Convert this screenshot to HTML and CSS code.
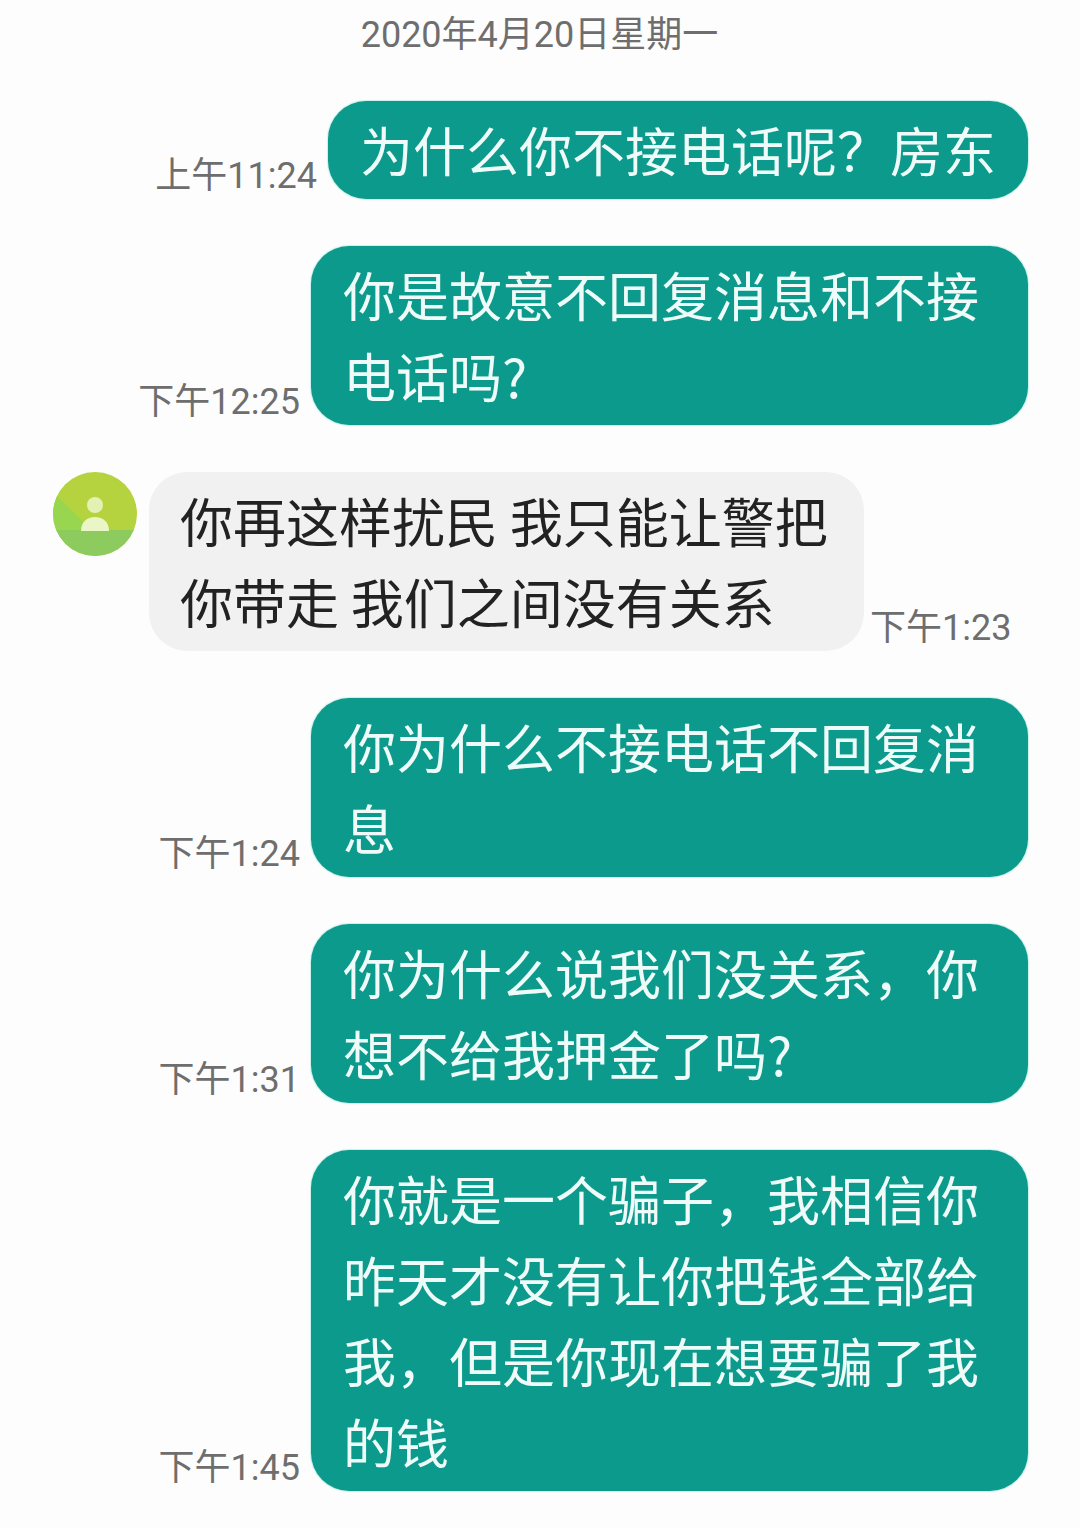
FILE: index.html
```html
<!DOCTYPE html>
<html lang="zh-CN">
  <head>
    <meta charset="utf-8">
    <title>聊天记录</title>
    <link rel="stylesheet" href="styles.css">
  </head>
  <body>
  <div class="chat">
    <div class="date">2020年4月20日星期一</div>

    <div class="row sent">
      <span class="time">上午11:24</span>
      <div class="bubble">为什么你不接电话呢？房东</div>
    </div>

    <div class="row sent">
      <span class="time">下午12:25</span>
      <div class="bubble">你是故意不回复消息和不接电话吗?</div>
    </div>

    <div class="row received">
      <svg class="avatar" viewBox="0 0 84 84" aria-hidden="true">
        <defs>
          <clipPath id="avatar-clip"><circle cx="42" cy="42" r="42"/></clipPath>
        </defs>
        <g clip-path="url(#avatar-clip)">
          <rect width="84" height="84" fill="#b4d33f"/>
          <polygon points="0,20 40,59 0,59" fill="#98d650"/>
          <rect y="58" width="84" height="26" fill="#8dcb5e"/>
        </g>
        <circle cx="42" cy="33" r="8" fill="#e3f1b4"/>
        <path d="M28 59c0-9 6-14 14-14s14 5 14 14z" fill="#eaf6c6"/>
      </svg>
      <div class="bubble">你再这样扰民 我只能让警把你带走 我们之间没有关系</div>
      <span class="time">下午1:23</span>
    </div>

    <div class="row sent">
      <span class="time">下午1:24</span>
      <div class="bubble">你为什么不接电话不回复消息</div>
    </div>

    <div class="row sent">
      <span class="time">下午1:31</span>
      <div class="bubble">你为什么说我们没关系，你想不给我押金了吗?</div>
    </div>

    <div class="row sent">
      <span class="time">下午1:45</span>
      <div class="bubble">你就是一个骗子，我相信你昨天才没有让你把钱全部给我，但是你现在想要骗了我的钱</div>
    </div>
  </div>
  </body>
</html>
```

FILE: styles.css
```css
:root {
  --teal: #0b9a8b;
  --grey-bubble: #f1f1f1;
  --time: #6e6e6e;
}

* {
  margin: 0;
  padding: 0;
  box-sizing: border-box;
  font-family: "Roboto", "Noto Sans CJK SC", sans-serif;
}

body {
  background: #fdfdfd;
}

.chat {
  display: flex;
  flex-direction: column;
  gap: 47px;
  height: 1528px;
  padding: 16px 52px 37px 53px;
}

.date {
  font-size: 36px;
  line-height: 38px;
  text-align: center;
  color: var(--time);
  margin-left: -2px;
}

.row {
  display: flex;
  align-items: flex-end;
}

.sent {
  justify-content: flex-end;
  gap: 11px;
}

.received {
  align-items: flex-start;
  gap: 12px;
}

.bubble {
  font-family: "Noto Sans CJK SC", sans-serif;
  font-size: 53px;
  line-height: 81px;
  padding: 8px 32px 9px 32px;
  border-radius: 38px;
}

.sent .bubble {
  max-width: 717px;
  background: var(--teal);
  color: #eefbf8;
  box-shadow: 0 0 1px 1px #c8f1ea;
}

.received .bubble {
  width: 715px;
  padding-left: 31px;
  background: var(--grey-bubble);
  color: #222;
}

.time {
  font-size: 36px;
  line-height: 36px;
  margin-bottom: 5px;
  color: var(--time);
  white-space: nowrap;
}

.received .time {
  align-self: flex-end;
  margin-left: -6px;
}

.avatar {
  width: 84px;
  height: 84px;
  flex-shrink: 0;
}
```
